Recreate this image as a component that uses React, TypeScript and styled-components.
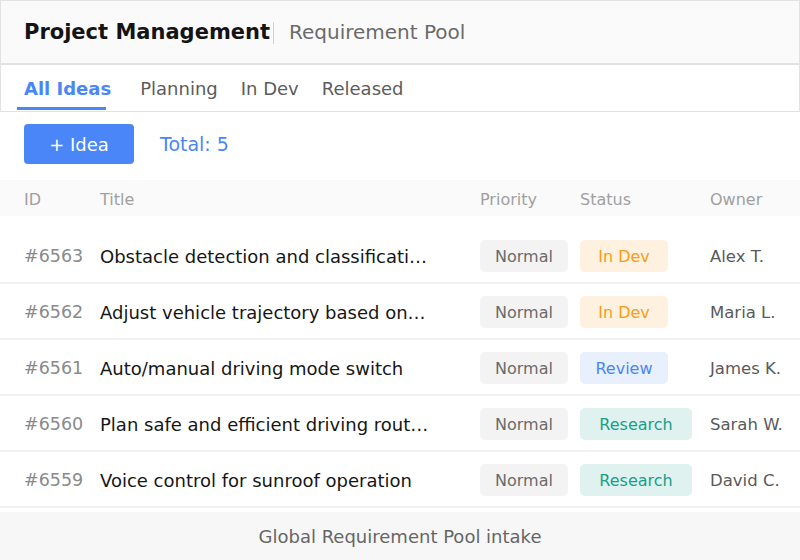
import React, { FC } from 'react';
import styled, { createGlobalStyle } from 'styled-components';

const GlobalStyle = createGlobalStyle`
  html, body {
    margin: 0;
    padding: 0;
    background: #ffffff;
  }
  body {
    font-family: 'DejaVu Sans', 'Liberation Sans', sans-serif;
    color: #222;
  }
`;

const Page = styled.div`
  width: 800px;
  height: 560px;
  display: flex;
  flex-direction: column;
  overflow: hidden;
  box-sizing: border-box;
`;

const Header = styled.header`
  height: 64px;
  box-sizing: border-box;
  border: 1px solid #e2e2e2;
  background: #fafafa;
  display: flex;
  align-items: center;
  padding: 0 23px;
`;

const Heading = styled.h1`
  margin: 0;
  font-size: 21px;
  font-weight: 700;
  color: #141414;
`;

const Divider = styled.span`
  width: 1px;
  height: 22px;
  background: #d2d2d2;
  margin: 2px 15px 0 3px;
`;

const Subtitle = styled.span`
  font-size: 20px;
  color: #6a6a6a;
`;

const Tabs = styled.nav`
  height: 48px;
  box-sizing: border-box;
  border: 1px solid #e2e2e2;
  display: flex;
  align-items: stretch;
  padding: 0 23px;
  gap: 23px;
`;

const Tab = styled.div<{ $active?: boolean }>`
  position: relative;
  display: flex;
  align-items: center;
  padding-top: 1px;
  margin-right: ${(p) => (p.$active ? '6px' : '0')};
  font-size: 18px;
  font-weight: ${(p) => (p.$active ? 700 : 400)};
  color: ${(p) => (p.$active ? '#4a86f7' : '#5c5c5c')};

  &::after {
    content: '';
    display: ${(p) => (p.$active ? 'block' : 'none')};
    position: absolute;
    left: -7px;
    right: 5px;
    bottom: 1px;
    height: 3px;
    background: #4a86f7;
  }
`;

const Toolbar = styled.div`
  display: flex;
  align-items: center;
  gap: 26px;
  padding: 12px 24px 16px;
`;

const AddButton = styled.button`
  width: 110px;
  height: 40px;
  border: none;
  border-radius: 4px;
  background: #4a86f7;
  color: #fff;
  font-family: inherit;
  font-size: 18px;
`;

const Total = styled.span`
  font-size: 19px;
  color: #4a86f7;
`;

const Row = styled.div`
  display: grid;
  grid-template-columns: 76px 380px 100px 130px 1fr;
  align-items: center;
  padding-left: 24px;
  box-sizing: border-box;
`;

const HeadRow = styled(Row)`
  height: 36px;
  padding-top: 3px;
  background: #fafafa;
  font-size: 16px;
  color: #a0a0a0;
  margin-bottom: 12px;
`;

const BodyRow = styled(Row)`
  height: 56px;
  padding-top: 2px;
  border-bottom: 2px solid #f2f2f2;
`;

const IdCell = styled.span`
  font-size: 17.5px;
  color: #8a8a8a;
`;

const TitleCell = styled.span`
  font-size: 18px;
  color: #161616;
  max-width: 330px;
  white-space: nowrap;
  overflow: hidden;
  text-overflow: ellipsis;
`;

const OwnerCell = styled.span`
  font-size: 16.5px;
  color: #5a5a5a;
  white-space: nowrap;
`;

type Tone = 'neutral' | 'dev' | 'review' | 'research';

const tones: Record<Tone, { bg: string; fg: string; width: number }> = {
  neutral: { bg: '#f3f3f3', fg: '#6a6a6a', width: 88 },
  dev: { bg: '#fff1e0', fg: '#f59c1a', width: 88 },
  review: { bg: '#e8f0fd', fg: '#4a86f7', width: 88 },
  research: { bg: '#e0f2f0', fg: '#1a9e88', width: 112 },
};

const Pill = styled.span<{ $tone: Tone }>`
  justify-self: start;
  width: ${(p) => tones[p.$tone].width}px;
  height: 32px;
  box-sizing: border-box;
  border-radius: 5px;
  display: inline-flex;
  align-items: center;
  justify-content: center;
  font-size: 16px;
  white-space: nowrap;
  background: ${(p) => tones[p.$tone].bg};
  color: ${(p) => tones[p.$tone].fg};
`;

const Footer = styled.footer`
  margin-top: auto;
  height: 48px;
  background: #f7f7f7;
  display: flex;
  align-items: center;
  justify-content: center;
  font-size: 18px;
  color: #666;
`;

interface Idea {
  id: number;
  title: string;
  status: string;
  tone: Tone;
  owner: string;
}

const ideas: Idea[] = [
  { id: 6563, title: 'Obstacle detection and classification for urban roads', status: 'In Dev', tone: 'dev', owner: 'Alex T.' },
  { id: 6562, title: 'Adjust vehicle trajectory based on road conditions', status: 'In Dev', tone: 'dev', owner: 'Maria L.' },
  { id: 6561, title: 'Auto/manual driving mode switch', status: 'Review', tone: 'review', owner: 'James K.' },
  { id: 6560, title: 'Plan safe and efficient driving routes for the fleet', status: 'Research', tone: 'research', owner: 'Sarah W.' },
  { id: 6559, title: 'Voice control for sunroof operation', status: 'Research', tone: 'research', owner: 'David C.' },
];

const tabs = ['All Ideas', 'Planning', 'In Dev', 'Released'];

const App: FC = () => (
  <Page>
    <GlobalStyle />
    <Header>
      <Heading>Project Management</Heading>
      <Divider />
      <Subtitle>Requirement Pool</Subtitle>
    </Header>
    <Tabs>
      {tabs.map((t, i) => (
        <Tab key={t} $active={i === 0}>
          {t}
        </Tab>
      ))}
    </Tabs>
    <Toolbar>
      <AddButton>+ Idea</AddButton>
      <Total>Total: {ideas.length}</Total>
    </Toolbar>
    <HeadRow>
      <span>ID</span>
      <span>Title</span>
      <span>Priority</span>
      <span>Status</span>
      <span>Owner</span>
    </HeadRow>
    {ideas.map((idea) => (
      <BodyRow key={idea.id}>
        <IdCell>#{idea.id}</IdCell>
        <TitleCell>{idea.title}</TitleCell>
        <Pill $tone="neutral">Normal</Pill>
        <Pill $tone={idea.tone}>{idea.status}</Pill>
        <OwnerCell>{idea.owner}</OwnerCell>
      </BodyRow>
    ))}
    <Footer>Global Requirement Pool intake</Footer>
  </Page>
);

export default App;
